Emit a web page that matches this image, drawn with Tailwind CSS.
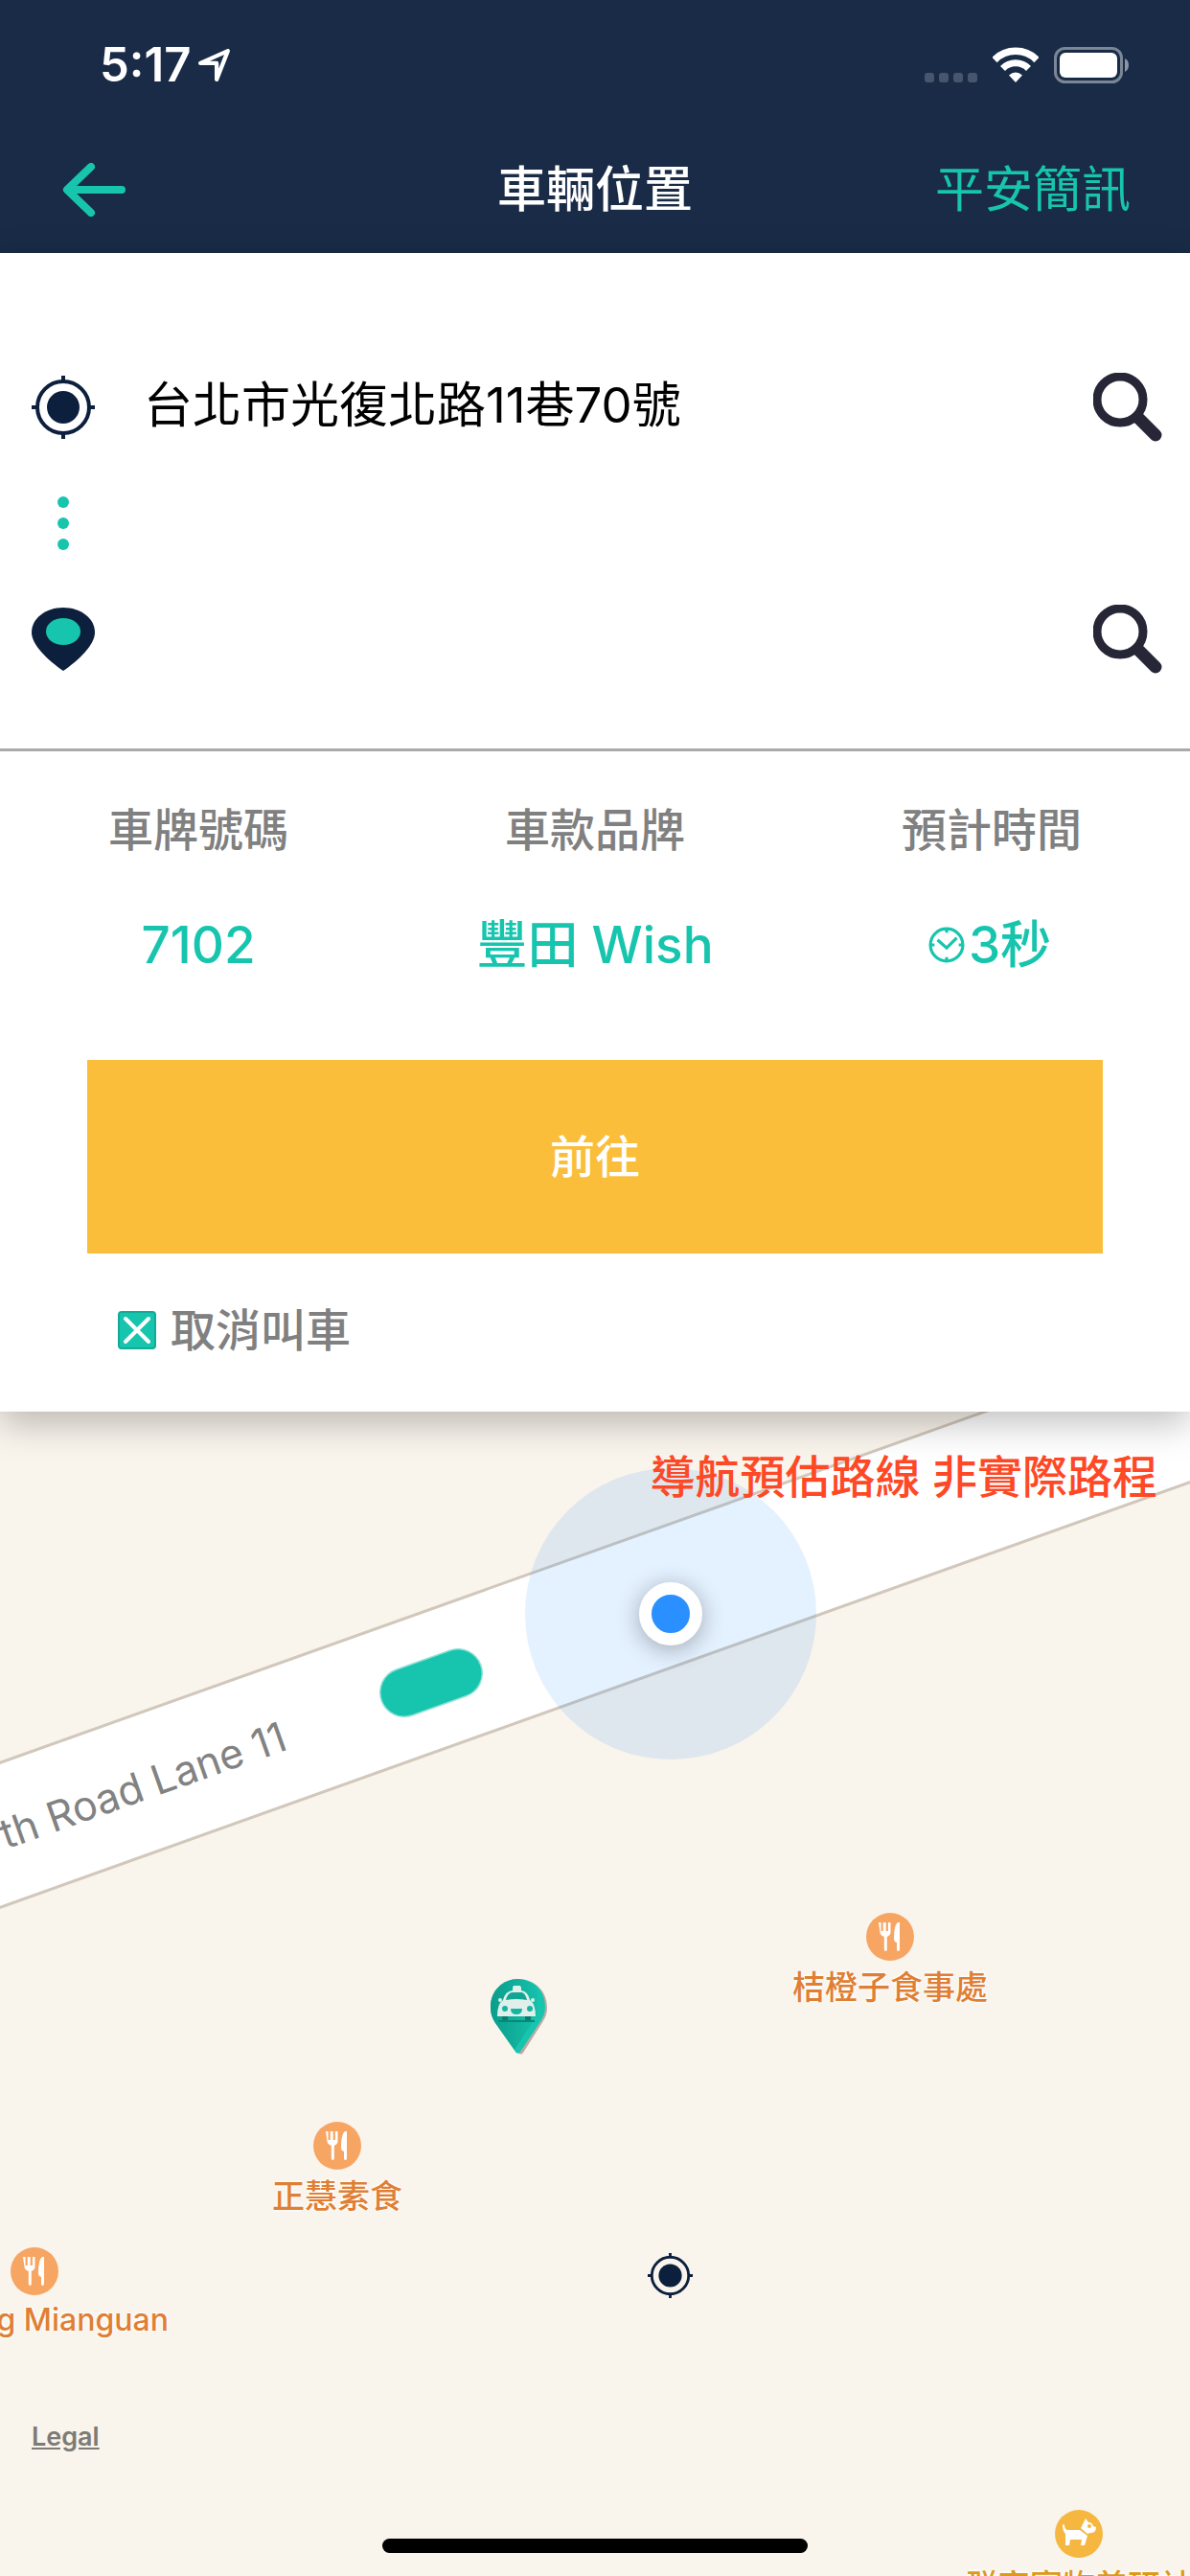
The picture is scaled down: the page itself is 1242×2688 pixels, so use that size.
<!DOCTYPE html>
<html lang="zh-Hant">
<head>
  <meta charset="UTF-8">
  <meta name="viewport" content="width=device-width, initial-scale=1">
  <title>車輛位置</title>
  <!-- Load Tailwind -->
  <script src="https://cdn.jsdelivr.net/npm/@tailwindcss/browser@4"></script>
</head>
<body class="bg-white font-['Inter','Noto_Sans_CJK_TC',sans-serif]">
  <!-- Shared icons -->
  <svg class="absolute w-0 h-0" aria-hidden="true">
    <linearGradient id="pinShade" x1="0" y1="0" x2="1" y2="0">
      <stop offset="0" stop-color="#0a9d8b"/>
      <stop offset="1" stop-color="#15c0aa"/>
    </linearGradient>
    <symbol id="target" viewBox="0 0 66 66">
      <circle cx="33" cy="33" r="27" fill="none" stroke="#0c1f3d" stroke-width="4"/>
      <circle cx="33" cy="33" r="17" fill="#0c1f3d"/>
      <path d="M33 0v7M33 59v7M0 33h7M59 33h7" stroke="#0c1f3d" stroke-width="4"/>
    </symbol>
    <symbol id="search" viewBox="0 0 72 72">
      <circle cx="28" cy="28" r="24" fill="none" stroke="#272637" stroke-width="9"/>
      <path d="M47 47l18 18" stroke="#272637" stroke-width="13" stroke-linecap="round"/>
    </symbol>
    <symbol id="food" viewBox="0 0 50 50">
      <circle cx="25" cy="25" r="25" fill="#f7a563"/>
      <path d="M13 10h2.500v9h2.200v-9h3v9h2.200v-9h2.600v10.500q0 2.500-3.700 4.500v13q0 2-1.500 2t-1.500-2v-13q-4.300-2-4.300-4.500z" fill="#fff"/>
      <path d="M35 10v28q0 2-1.500 2t-1.500-2v-7q-3-.5-3-4.500 0-14 4-16.500z" fill="#fff"/>
    </symbol>
  </svg>

  <div class="min-h-screen flex flex-col">
    <!-- Header -->
    <header class="bg-[#192b46] text-white">
      <div class="h-[132px] pl-[104px] pr-[62px] flex items-center justify-between">
        <div class="flex items-center gap-2 pt-1">
          <span class="text-[49px] leading-[60px] font-semibold">5:17</span>
          <svg class="w-[34px] h-[34px]" viewBox="0 0 32 32" fill="none" stroke="#fff" stroke-width="4" stroke-linejoin="round">
            <path d="M2 14L29 2 18 30V14z"/>
          </svg>
        </div>
        <div class="flex items-center gap-4 pt-1">
          <svg class="w-14 h-10" viewBox="0 0 56 40" fill="#47566d">
            <rect x="1" y="28" width="10" height="10" rx="3"/>
            <rect x="16" y="28" width="10" height="10" rx="3"/>
            <rect x="31" y="28" width="10" height="10" rx="3"/>
            <rect x="46" y="28" width="10" height="10" rx="3"/>
          </svg>
          <svg class="w-12 h-10" viewBox="0 0 48 40" fill="none" stroke="#fff">
            <path d="M2 14.500a31 31 0 0 1 44 0" stroke-width="7.500"/>
            <path d="M10.500 23.500a19 19 0 0 1 27 0" stroke-width="7"/>
            <path d="M24 38l-7-7.500q7-6 14 0z" fill="#fff" stroke="none"/>
          </svg>
          <svg class="w-20 h-10" viewBox="0 0 80 40">
            <rect x="1.500" y="2.500" width="69" height="35" rx="10" fill="none" stroke="#7b8696" stroke-width="3"/>
            <rect x="6" y="7" width="60" height="26" rx="6" fill="#fff"/>
            <path d="M74 13q4 2 4 7t-4 7z" fill="#8b95a3"/>
          </svg>
        </div>
      </div>
      <nav class="h-[132px] px-[62px] grid grid-cols-3 items-center text-[51px] leading-[60px]">
        <button class="justify-self-start" aria-label="返回">
          <svg class="w-[70px] h-14" viewBox="0 0 70 56" fill="none" stroke="#17c5ae" stroke-width="8" stroke-linecap="round" stroke-linejoin="round">
            <path d="M33 4L8 28l25 24M10 28h55"/>
          </svg>
        </button>
        <h1 class="justify-self-center font-medium whitespace-nowrap">車輛位置</h1>
        <button class="justify-self-end text-[#17c5ae] whitespace-nowrap">平安簡訊</button>
      </nav>
    </header>

    <!-- Booking panel -->
    <main class="relative z-10 bg-white shadow-[0_12px_36px_rgba(0,0,0,0.25)]">
      <form class="pt-[125px] pb-[78px] pl-[33px] pr-[29px] border-b-3 border-[#a9a9a9]">
        <div class="h-[72px] flex items-center">
          <svg class="w-[66px] h-[66px]"><use href="#target"/></svg>
          <input class="flex-1 min-w-0 ml-[51px] pb-1 text-[51px] leading-[60px] text-black outline-none" type="text" aria-label="上車地點" value="台北市光復北路11巷70號">
          <button type="button" aria-label="搜尋上車地點"><svg class="w-[72px] h-[72px]"><use href="#search"/></svg></button>
        </div>
        <div class="w-[66px] h-[170px] flex flex-col items-center justify-center gap-[10px]">
          <i class="w-3 h-3 rounded-full bg-[#17c5ae]"></i>
          <i class="w-3 h-3 rounded-full bg-[#17c5ae]"></i>
          <i class="w-3 h-3 rounded-full bg-[#17c5ae]"></i>
        </div>
        <div class="h-[72px] flex items-center">
          <svg class="w-[66px] h-[66px]" viewBox="0 0 66 66">
            <path d="M33 0c18 0 33 11 33 26 0 13-17 29-33 40C17 55 0 39 0 26 0 11 15 0 33 0z" fill="#0c1f3d"/>
            <ellipse cx="33" cy="25" rx="18" ry="14" fill="#17c5ae"/>
          </svg>
          <input class="flex-1 min-w-0 ml-[51px] pb-1 text-[51px] leading-[60px] text-black outline-none" type="text" aria-label="目的地">
          <button type="button" aria-label="搜尋目的地"><svg class="w-[72px] h-[72px]"><use href="#search"/></svg></button>
        </div>
      </form>

      <dl class="pt-[52px] grid grid-cols-3 text-center font-medium">
        <div>
          <dt class="text-[47px] leading-[60px] text-[#808080]">車牌號碼</dt>
          <dd class="mt-[58px] text-[53px] leading-[64px] text-[#17c5ae]">7102</dd>
        </div>
        <div>
          <dt class="text-[47px] leading-[60px] text-[#808080]">車款品牌</dt>
          <dd class="mt-[58px] text-[53px] leading-[64px] text-[#17c5ae]">豐田 Wish</dd>
        </div>
        <div>
          <dt class="text-[47px] leading-[60px] text-[#808080]">預計時間</dt>
          <dd class="mt-[58px] pr-1 text-[53px] leading-[64px] text-[#17c5ae] flex items-center justify-center gap-1">
            <svg class="w-[38px] h-[38px]" viewBox="0 0 36 36" fill="none" stroke="#17c5ae" stroke-width="3">
              <circle cx="18" cy="18" r="16"/>
              <path d="M9 13l9 8 10-10M18 2v4M18 30v4M2 18h4M30 18h4"/>
            </svg>
            3秒
          </dd>
        </div>
      </dl>

      <div class="px-[91px] pt-[88px] pb-[55px]">
        <button class="w-full h-[202px] bg-[#fabe3a] text-white text-[47px] leading-[60px] font-medium">前往</button>
        <button class="mt-[50px] ml-8 flex items-center gap-[15px] text-[47px] leading-[60px] font-medium text-[#808080]">
          <svg class="w-10 h-10" viewBox="0 0 40 40">
            <rect x="1" y="1" width="38" height="38" rx="3" fill="#17c5ae" stroke="#12ab98" stroke-width="2"/>
            <path d="M8 8l24 24M32 8L8 32" stroke="#fff" stroke-width="4" stroke-linecap="round"/>
          </svg>
          取消叫車
        </button>
      </div>
    </main>

    <!-- Map -->
    <section class="relative flex-1 min-h-[1200px] overflow-hidden bg-[#f9f4ec] font-medium text-[#e07f33]">
      <svg class="absolute inset-0 w-full h-full" viewBox="0 0 1242 1215" preserveAspectRatio="xMinYMin slice">
        <path d="M-30 377L1272 -87V63L-30 528z" fill="#fff" stroke="#d1c7bb" stroke-width="3"/>
        <text x="302" y="352" transform="rotate(-19.5 302 352)" text-anchor="end" font-size="43" font-weight="400" fill="#828282">North Road Lane 11</text>
        <path d="M422 293L478 273" stroke="#8fe0d5" stroke-width="52" stroke-linecap="round"/>
        <path d="M422 293L478 273" stroke="#17c5ae" stroke-width="49" stroke-linecap="round"/>
        <circle cx="700" cy="211" r="152" fill="#2a90ff" fill-opacity="0.125"/>
      </svg>

      <span class="absolute left-[667px] top-[178px] w-[66px] h-[66px] rounded-full border-[13px] border-white bg-[#2a90ff] shadow-[0_4px_24px_rgba(0,0,0,0.3)]"></span>
      <p class="absolute right-[34px] top-[38px] text-[47px] leading-[60px] text-[#ff4826] whitespace-nowrap">導航預估路線 非實際路程</p>

      <!-- Taxi -->
      <svg class="absolute left-[512px] top-[592px] w-[60px] h-[80px]" viewBox="0 0 60 80">
        <path d="M31 1c16 0 28 12 28 29 0 8-3 12-6 17L34 77q-3 3-5 0z" fill="#b9aba5"/>
        <path d="M29 0c16 0 28 12 28 29 0 8-3 12-6 17L31 76q-3 3-5 0L5 46C2 41 0 37 0 29 0 12 13 0 29 0z" fill="#17c5ae"/>
        <path d="M29 0C13 0 0 12 0 29c0 8 2 12 5 17l20 28 24-37V10Q40 1 29 0z" fill="url(#pinShade)"/>
        <path d="M8 44h38" stroke="#07897a" stroke-width="2"/>
        <rect x="12" y="37" width="6" height="6" rx="1" fill="#087c6f"/>
        <rect x="36" y="37" width="6" height="6" rx="1" fill="#087c6f"/>
        <path d="M23 9l1-2h7l1 2v3q7 1 9 10 6 4 6 17H7q0-13 6-17 2-9 10-10z" fill="#e1efeb"/>
        <path d="M16 22q2-8 7-8h9q4 0 6 8-11-2-22 0z" fill="#12a593"/>
        <circle cx="10" cy="22" r="2" fill="#e1efeb"/><circle cx="44" cy="22" r="2" fill="#e1efeb"/>
        <circle cx="15" cy="31" r="3" fill="#17b5a2"/><circle cx="41" cy="31" r="3" fill="#17b5a2"/>
        <path d="M21 31h12q0 6-6 6t-6-6z" fill="#17b5a2"/>
      </svg>
      <svg class="absolute left-[676px] top-[878px] w-[47px] h-[47px]"><use href="#target"/></svg>

      <!-- Places -->
      <div class="absolute left-[929px] top-[523px] -translate-x-1/2 flex flex-col items-center gap-[6px] [text-shadow:0_0_3px_#fff,0_0_3px_#fff,0_0_4px_#fff]">
        <svg class="w-[50px] h-[50px]"><use href="#food"/></svg>
        <span class="text-[34px] leading-[44px] whitespace-nowrap">桔橙子食事處</span>
      </div>
      <div class="absolute left-[352px] top-[741px] -translate-x-1/2 flex flex-col items-center gap-[6px] [text-shadow:0_0_3px_#fff,0_0_3px_#fff,0_0_4px_#fff]">
        <svg class="w-[50px] h-[50px]"><use href="#food"/></svg>
        <span class="text-[34px] leading-[44px] whitespace-nowrap">正慧素食</span>
      </div>
      <div class="absolute left-[36px] top-[872px] w-[280px] -translate-x-1/2 flex flex-col items-center gap-1 [text-shadow:0_0_3px_#fff,0_0_3px_#fff,0_0_4px_#fff]">
        <svg class="w-[50px] h-[50px]"><use href="#food"/></svg>
        <span class="self-end text-[32px] leading-[44px] whitespace-nowrap">g Mianguan</span>
      </div>
      <div class="absolute left-[1126px] top-[1146px] w-[250px] -translate-x-1/2 flex flex-col items-center gap-2 text-[#dc9a1c] [text-shadow:0_0_3px_#fff,0_0_3px_#fff,0_0_4px_#fff]">
        <svg class="w-[50px] h-[50px]" viewBox="0 0 50 50">
          <circle cx="25" cy="25" r="25" fill="#f6b740"/>
          <path d="M8 16q1-2 2 0 0 5 4 5h12l8 6-3 10h-4l1-6H16l-1 6h-4V25q-3-3-3-9z" fill="#fff"/>
          <path d="M27 19l5-10 3 4q4 0 5 4l3 1q0 6-6 6l-3 1z" fill="#fff"/>
          <circle cx="36" cy="17" r="2" fill="#f6b740"/>
        </svg>
        <span class="text-[34px] leading-[44px] whitespace-nowrap">群家寵物美研社</span>
      </div>

      <a href="#" class="absolute left-[33px] top-[1052px] text-[27px] leading-[36px] font-semibold text-[#7d7b76] underline">Legal</a>
      <div class="absolute left-1/2 bottom-6 w-[444px] h-[15px] -translate-x-1/2 rounded-full bg-black"></div>
    </section>
  </div>
</body>
</html>
